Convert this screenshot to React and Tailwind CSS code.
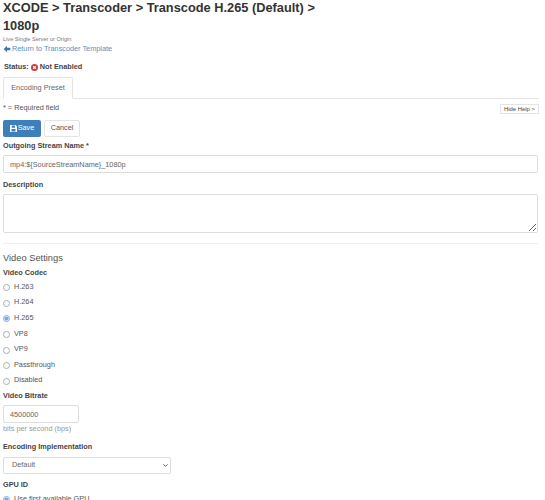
import { ChevronDown } from "lucide-react";

const codecs = ["H.263", "H.264", "H.265", "VP8", "VP9", "Passthrough", "Disabled"];

function Radio({ checked, label, name }) {
  return (
    <label className="flex items-center h-[15.6px]">
      <input type="radio" name={name} defaultChecked={checked} className="w-[7px] h-[7px] m-0 mt-[2px] mr-[4px] opacity-60 accent-[#2f6fd6]" />
      <span className="text-[7.3px] leading-[10px] text-[#555]">{label}</span>
    </label>
  );
}

function FieldLabel({ className, children }) {
  return <label className={`block text-[7.3px] leading-[10px] font-bold text-[#444] ${className}`}>{children}</label>;
}

export default function App() {
  return (
    <div className="w-[545px] h-[500px] overflow-hidden bg-white pl-[3px] font-['Liberation_Sans',Arial,sans-serif] text-[#333]">
      <h1 className="text-[12.8px] leading-[18px] font-bold text-[#333] -mt-[1px] m-0">
        XCODE &gt; Transcoder &gt; Transcode H.265 (Default) &gt;
        <br />
        1080p
      </h1>
      <div className="text-[5.6px] leading-[8px] text-[#777]">Live Single Server or Origin</div>
      <a className="flex items-center text-[7.3px] leading-[10px] h-[10px] mt-[1px] text-[#5b8fc0]">
        <svg viewBox="0 0 12 12" className="w-[8px] h-[8px] mr-[1px] fill-[#337ab7]">
          <path d="M6 1 1 6l5 5V8h5V4H6z" />
        </svg>
        Return to Transcoder Template
      </a>
      <div className="flex items-center text-[7.3px] leading-[10px] h-[10px] font-bold mt-[8px] ml-[1px] text-[#444]">
        Status:
        <svg viewBox="0 0 12 12" className="w-[7px] h-[7px] mx-[2px]">
          <circle cx="6" cy="6" r="6" fill="#c9403c" />
          <path d="M3.8 3.8l4.4 4.4M8.2 3.8 3.8 8.2" stroke="#fff" strokeWidth="2" />
        </svg>
        Not Enabled
      </div>

      {/* Tabs */}
      <div className="border-b border-[#e4e4e4] mt-[5px] w-[536px] h-[22px]">
        <div className="w-[70px] h-[22px] border border-[#e4e4e4] border-b-white rounded-t-[2px] bg-white text-center text-[7.3px] leading-[19px] text-[#666]">
          Encoding Preset
        </div>
      </div>

      <div className="flex items-start justify-between w-[536px] mt-[4px] h-[11px]">
        <div className="text-[7.3px] leading-[10px] text-[#555]">* = Required field</div>
        <button className="mt-[1px] w-[39px] h-[10px] border border-[#e4e4e4] text-[5.9px] leading-[8px] text-[#444]">Hide Help &gt;</button>
      </div>

      <div className="flex gap-[3px] mt-[6px]">
        <button className="flex items-center justify-center gap-[1px] w-[38px] h-[17px] bg-[#3f7fb9] rounded-[2px] text-white text-[7.3px]">
          <svg viewBox="0 0 12 12" className="w-[7px] h-[7px] fill-white">
            <path d="M0 0h9.5L12 2.5V12H0zM3 1v3.5h5.5V1zM2.5 7v4h7V7z" fillRule="evenodd" />
          </svg>
          Save
        </button>
        <button className="w-[36px] h-[17px] border border-[#e4e4e4] rounded-[2px] text-[7.3px] text-[#555] bg-white">Cancel</button>
      </div>

      <FieldLabel className="mt-[4px]">Outgoing Stream Name *</FieldLabel>
      <input readOnly value="mp4:${SourceStreamName}_1080p" className="block w-[535px] h-[18px] mt-[4px] px-[6px] border border-[#ddd] rounded-[2px] text-[7.3px] text-[#666] outline-none" />

      <FieldLabel className="mt-[7px]">Description</FieldLabel>
      <textarea className="block w-[535px] h-[39px] mt-[4px] border border-[#ddd] rounded-[2px] outline-none" />

      <hr className="border-[#eee] mt-[10px] w-[535px]" />

      <h3 className="text-[9.3px] leading-[12px] text-[#555] mt-[8px]">Video Settings</h3>
      <FieldLabel className="mt-[4px]">Video Codec</FieldLabel>
      <div className="mt-[1px]">
        {codecs.map((c) => (
          <Radio key={c} name="codec" label={c} checked={c === "H.265"} />
        ))}
      </div>

      <FieldLabel className="mt-[3px]">Video Bitrate</FieldLabel>
      <input readOnly value="4500000" className="block w-[76px] h-[18px] mt-[4px] px-[6px] border border-[#ddd] rounded-[2px] text-[7.3px] text-[#666] outline-none" />
      <div className="text-[7.3px] leading-[10px] text-[#999] mt-[1px]">bits per second (bps)</div>

      <FieldLabel className="mt-[8px]">Encoding Implementation</FieldLabel>
      <div className="relative w-[168px] mt-[5px]">
        <select className="block appearance-none w-full h-[17px] px-[8px] border border-[#ddd] rounded-[2px] text-[7.3px] text-[#666] bg-white outline-none">
          <option>Default</option>
        </select>
        <ChevronDown size={7} strokeWidth={3} className="absolute right-[2px] top-[5px] text-[#444]" />
      </div>

      <FieldLabel className="mt-[6px]">GPU ID</FieldLabel>
      <div className="mt-[1px]">
        <Radio name="gpu" checked label="Use first available GPU" />
      </div>
    </div>
  );
}
